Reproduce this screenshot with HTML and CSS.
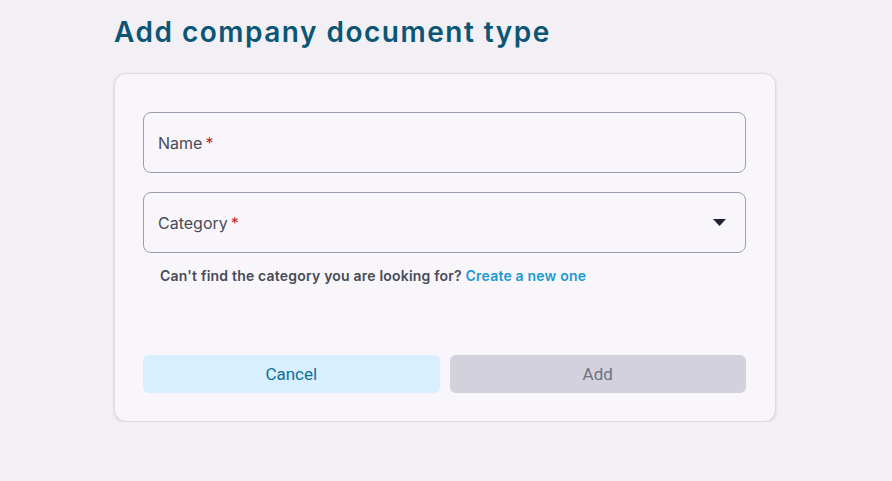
FILE: index.html
```html
<!DOCTYPE html>
<html lang="en">
<head>
    <meta charset="UTF-8">
    <meta name="viewport" content="width=device-width, initial-scale=1.0">
    <title>Add company document type</title>
    <link rel="stylesheet" href="styles.css">
</head>
<body>
    <main class="page">
        <h1 class="page-title">Add company document type</h1>
        <form class="card">
            <label class="field">
                <span class="field-label">Name<span class="req">*</span></span>
            </label>
            <label class="field field-select">
                <span class="field-label">Category<span class="req">*</span></span>
                <svg class="caret" width="13" height="7" viewBox="0 0 13 7"><path d="M0 0h13L6.5 7z" fill="#1f2430"/></svg>
            </label>
            <p class="hint">Can't find the category you are looking for? <a class="hint-link">Create a new one</a></p>
            <div class="actions">
                <button type="button" class="btn btn-cancel">Cancel</button>
                <button type="button" class="btn btn-add" disabled>Add</button>
            </div>
        </form>
    </main>
</body>
</html>
```

FILE: styles.css
```css
* {
    box-sizing: border-box;
}
body {
    margin: 0;
    background: #f2f0f5;
    font-family: Inter, "Noto Sans", sans-serif;
}
.page {
    width: 662px;
    margin-left: 114px;
    padding-top: 14px;
}
.page-title {
    margin: 0 0 23px;
    font-size: 28px;
    line-height: 36px;
    font-weight: 600;
    color: #0b5675;
    letter-spacing: 1.5px;
}
.card {
    background: #f8f6fb;
    border: 1px solid #dcdae0;
    border-radius: 12px;
    box-shadow: 0 1px 3px rgba(0, 0, 0, .12);
    padding: 38px 29px 28px 28px;
}
.field {
    display: flex;
    align-items: center;
    height: 61px;
    padding: 0 14px;
    border: 1px solid #9a9eaf;
    border-radius: 8px;
    margin-bottom: 19px;
}
.field-select {
    justify-content: space-between;
    margin-bottom: 0;
    padding-right: 19px;
}
.field-label {
    font-size: 16px;
    color: #474c58;
}
.req {
    color: #c0262d;
    margin-left: 3px;
}
.hint {
    margin: 14px 0 0 17px;
    font-size: 14px;
    font-weight: 600;
    color: #474c58;
    line-height: 17px;
    letter-spacing: 0.2px;
}
.hint-link {
    color: #1a9ad2;
    cursor: pointer;
}
.actions {
    display: grid;
    grid-template-columns: 1fr 1fr;
    gap: 10px;
    margin-top: 71px;
}
.btn {
    height: 38px;
    border: 0;
    border-radius: 6px;
    font-family: Roboto, sans-serif;
    font-size: 17px;
}
.btn-cancel {
    background: #d8efff;
    color: #0f6f94;
}
.btn-add {
    background: #d3d2dc;
    color: #6e7180;
}
```
